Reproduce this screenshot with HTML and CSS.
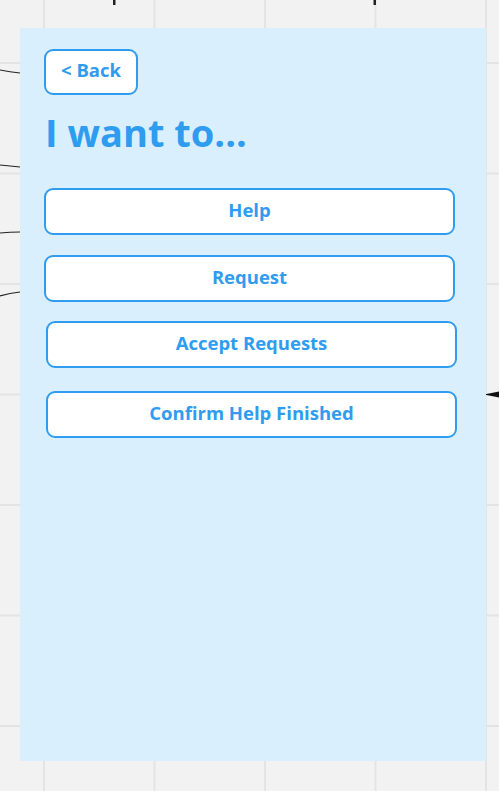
FILE: index.html
```html
<!DOCTYPE html>
<html>
<head>
<meta charset="utf-8">
<link rel="stylesheet" href="styles.css">
</head>
<body>
<div class="canvas">
  <svg class="connectors" width="499" height="791" viewBox="0 0 499 791">
    <path d="M0 70 Q10 72 20 73" fill="none" stroke="#222" stroke-width="1.2"/>
    <path d="M0 165 Q10 166 20 167" fill="none" stroke="#222" stroke-width="1.2"/>
    <path d="M0 233 Q10 232 20 232" fill="none" stroke="#222" stroke-width="1.2"/>
    <path d="M0 296 Q10 293 20 292" fill="none" stroke="#222" stroke-width="1.2"/>
    <rect x="113" y="0" width="2.5" height="5" fill="#222"/>
    <rect x="373.5" y="0" width="2.5" height="5" fill="#222"/>
    <path d="M499 394.5 L486 394.5" stroke="#111" stroke-width="1"/>
    <polygon points="484,394.5 499,391.5 499,397.5" fill="#111"/>
  </svg>
  <section class="panel">
    <button class="back">&lt; Back</button>
    <h1 class="title">I want to...</h1>
    <div class="options">
      <button class="option">Help</button>
      <button class="option">Request</button>
      <button class="option option-shift option-accept">Accept Requests</button>
      <button class="option option-shift option-confirm">Confirm Help Finished</button>
    </div>
  </section>
</div>
</body>
</html>
```
FILE: styles.css
```css
html, body {
  margin: 0;
  padding: 0;
}
body {
  width: 499px;
  height: 791px;
  overflow: hidden;
  font-family: "Open Sans", "Noto Sans", sans-serif;
  background-color: #f2f2f2;
  background-image:
    linear-gradient(to right, #e4e4e4 0, #e4e4e4 2px, transparent 2px),
    linear-gradient(to bottom, #e4e4e4 0, #e4e4e4 2px, transparent 2px);
  background-size: 110.5px 110.5px;
  background-position: 43px 62px;
}
.canvas {
  position: relative;
  width: 499px;
  height: 791px;
  padding-top: 28px;
  padding-left: 20px;
  box-sizing: border-box;
}
.connectors {
  position: absolute;
  left: 0;
  top: 0;
  z-index: 0;
}
.panel {
  position: relative;
  z-index: 1;
  width: 466px;
  height: 733px;
  background: #daeffe;
  box-sizing: border-box;
  padding: 21px 0 0 24px;
  display: flex;
  flex-direction: column;
  align-items: flex-start;
}
.back {
  width: 94px;
  height: 46px;
  background: #fff;
  border: 2px solid #2f9cf0;
  border-radius: 9px;
  color: #2f9cf0;
  font-family: "Open Sans", sans-serif;
  font-weight: 700;
  font-size: 18.5px;
  padding: 0 0 5px 0;
  margin: 0;
  box-sizing: border-box;
}
.title {
  margin: 14px 0 0 1px;
  font-size: 38px;
  line-height: 46px;
  font-weight: 700;
  color: #2f9cf0;
}
.options {
  display: flex;
  flex-direction: column;
  gap: 20px;
  margin-top: 33px;
}
.option {
  width: 411px;
  height: 47px;
  background: #fff;
  border: 2px solid #2f9cf0;
  border-radius: 9px;
  color: #2f9cf0;
  font-family: "Open Sans", sans-serif;
  font-weight: 700;
  font-size: 18.5px;
  padding: 0 0 4px 0;
  margin: 0;
  box-sizing: border-box;
}
.option-shift {
  margin-left: 2px;
}
.option-accept {
  margin-top: -1px;
}
.option-confirm {
  margin-top: 3px;
}
```
